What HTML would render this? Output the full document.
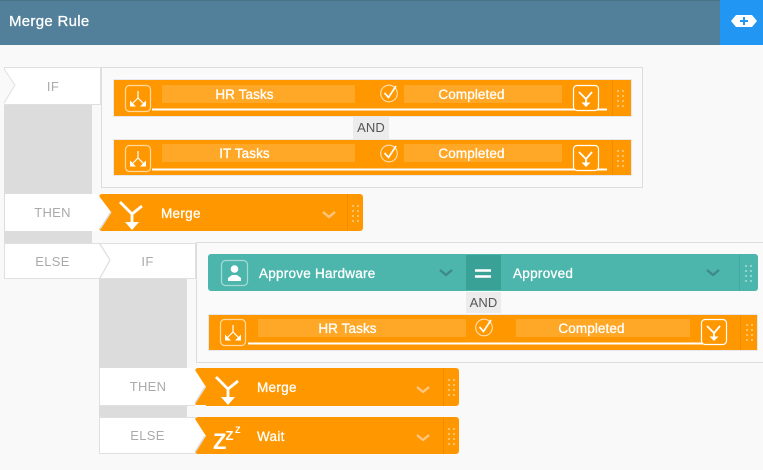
<!DOCTYPE html>
<html><head><meta charset="utf-8"><style>
html,body{margin:0;padding:0}
body{width:763px;height:470px;overflow:hidden;background:#f9f9f9;position:relative;font-family:"Liberation Sans",sans-serif}
div{position:absolute;box-sizing:border-box}
.t{white-space:nowrap;text-align:center;color:#fff;font-size:13.5px;line-height:20px;letter-spacing:.1px;-webkit-text-stroke:.3px #fff}
.m{font-size:13.5px;letter-spacing:.3px}
.l{color:#aaa;text-align:center;font-size:13px;background:#fff;border:1px solid #e0e0e0;letter-spacing:.3px}
.o{background:#ff9800;box-shadow:0 0 0 1px #e6e8ee}
.f{background:#ffa726}
.a{background:#ececec;color:#555;font-size:13px;text-align:center;letter-spacing:.1px}
svg{position:absolute;left:0;top:0}
</style></head><body>
<div style="left:0;top:0;width:763px;height:45px;background:#527f99;border-top:1px solid #4b7489"></div>
<div class="t" style="left:9px;top:12px;font-size:15px;letter-spacing:.3px">Merge Rule</div>
<div style="left:720px;top:0;width:43px;height:45px;background:#2196f3"></div>

<div style="left:4px;top:105px;width:88px;height:140px;background:#dcdcdc"></div>
<div style="left:99px;top:279px;width:88px;height:138px;background:#dcdcdc"></div>

<div style="left:101px;top:67px;width:542px;height:121px;background:#fafafa;border:1px solid #ddd"></div>
<div style="left:196px;top:242px;width:570px;height:121px;background:#fafafa;border:1px solid #ddd"></div>

<div class="l" style="left:4px;top:67px;width:97px;height:38px;line-height:37px;padding-left:1px">IF</div>
<div class="l" style="left:5px;top:194px;width:95px;height:37px;line-height:35px;border:0;padding-top:1px">THEN</div>
<div class="l" style="left:4px;top:243px;width:97px;height:36px;line-height:35px">ELSE</div>
<div class="l" style="left:99px;top:243px;width:97px;height:36px;line-height:35px">IF</div>
<div class="l" style="left:99px;top:368px;width:97px;height:38px;line-height:37px;border-width:0 0 1px 1px">THEN</div>
<div class="l" style="left:99px;top:417px;width:97px;height:37px;line-height:36px">ELSE</div>

<!-- row 1 -->
<div class="o" style="left:114px;top:80px;width:517px;height:36px"></div>
<div class="f" style="left:162px;top:85px;width:193px;height:18px"></div>
<div class="f" style="left:404px;top:85px;width:158px;height:18px"></div>
<div class="t" style="left:162px;top:85px;width:165px">HR Tasks</div>
<div class="t" style="left:404px;top:85px;width:135px">Completed</div>
<div class="a" style="left:353px;top:117px;width:36px;height:22px;line-height:22px">AND</div>
<!-- row 2 -->
<div class="o" style="left:114px;top:140px;width:517px;height:35px"></div>
<div class="f" style="left:162px;top:144px;width:193px;height:18px"></div>
<div class="f" style="left:404px;top:144px;width:158px;height:18px"></div>
<div class="t" style="left:162px;top:144px;width:165px">IT Tasks</div>
<div class="t" style="left:404px;top:144px;width:135px">Completed</div>

<!-- merge 1 -->
<div style="left:99px;top:194px;width:264px;height:37px;background:#ff9800;border-radius:3px"></div>
<div class="t m" style="left:161px;top:204px">Merge</div>

<!-- teal -->
<div style="left:208px;top:254px;width:550px;height:37px;background:#4db6ac;border-radius:3px"></div>
<div style="left:466px;top:255px;width:35px;height:35px;background:#3aa197"></div>
<div class="t m" style="left:259px;top:264px;letter-spacing:.25px">Approve Hardware</div>
<div class="t m" style="left:513px;top:264px">Approved</div>
<div class="a" style="left:466px;top:292px;width:35px;height:21px;line-height:22px">AND</div>

<!-- row 3 -->
<div class="o" style="left:209px;top:315px;width:548px;height:35px"></div>
<div class="f" style="left:258px;top:319px;width:208px;height:18px"></div>
<div class="f" style="left:516px;top:319px;width:174px;height:18px"></div>
<div class="t" style="left:258px;top:319px;width:179px">HR Tasks</div>
<div class="t" style="left:516px;top:319px;width:151px">Completed</div>

<!-- merge 2, wait -->
<div style="left:195px;top:368px;width:264px;height:38px;background:#ff9800;border-radius:3px"></div>
<div class="t m" style="left:257px;top:378px">Merge</div>
<div style="left:195px;top:417px;width:264px;height:37px;background:#ff9800;border-radius:3px"></div>
<div class="t m" style="left:257px;top:427px">Wait</div>

<svg width="763" height="470" viewBox="0 0 763 470" fill="none">
<defs>
<g id="split"><rect x=".5" y=".5" width="25" height="26" rx="4" stroke="#ffd9a0" stroke-width="1.2"/><path d="M13 6v7M13 13l-6 6M13 13l6 6" stroke="#fff" stroke-width="1.2"/><path d="M5 21.500v-6l6 6zM21 21.500v-6l-6 6z" fill="#fff"/></g>
<g id="mbox"><rect x=".5" y=".5" width="25" height="25" rx="3.500" fill="#ff9800" stroke="#fff" stroke-width="1.200"/><path d="M6 7l7 7 6-7M13 14v5" stroke="#fff" stroke-width="1.800"/><path d="M8.500 17.500h9l-4.500 4.500z" fill="#fff"/></g>
<g id="chk"><circle cx="9" cy="9.500" r="8.300" stroke="#ffe0b2" stroke-width="1.100"/><path d="M4.500 9l4 4.500L16 2" stroke="#fff" stroke-width="1.700"/></g>
<g id="merge"><path d="M1 1l12 12M13 13l10-8M13 13v11" stroke="#fff" stroke-width="2.800"/><path d="M6 21h14l-7 8z" fill="#fff"/></g>
<g id="dots" fill="#ffc266"><rect x="0" y="0" width="2" height="2"/><rect x="5" y="0" width="2" height="2"/><rect x="0" y="5" width="2" height="2"/><rect x="5" y="5" width="2" height="2"/><rect x="0" y="10" width="2" height="2"/><rect x="5" y="10" width="2" height="2"/><rect x="0" y="15" width="2" height="2"/><rect x="5" y="15" width="2" height="2"/></g>
</defs>
<!-- notches -->
<path d="M4 68l11 17-11 20z" fill="#f9f9f9"/><path d="M4 69l11 16-11 18" stroke="#e0e0e0"/>
<path d="M99 196l12 16-12 17z" fill="#fff"/><path d="M100 229l11-17" stroke="#ddd" stroke-width="1.500"/>
<path d="M99 244l11 16-11 18z" fill="#fff"/><path d="M100 244l10 16-10 18" stroke="#ddd" stroke-width="1.200"/>
<path d="M195 370l11 17-11 17z" fill="#fff"/><path d="M195 403l10-16" stroke="#ddd" stroke-width="1.500"/>
<path d="M195 419l11 17-11 17z" fill="#fff"/><path d="M195 452l10-16" stroke="#ddd" stroke-width="1.500"/>
<path d="M195 405.500h11" stroke="#fff"/>
<!-- row icons -->
<use href="#split" x="125" y="85"/><use href="#split" x="125" y="145"/><use href="#split" x="220" y="319"/>
<path d="M152 109.500h455M152 169.500h455M248 343.500h470" stroke="#fff" stroke-width="2"/>
<use href="#mbox" x="573" y="85"/><use href="#mbox" x="573" y="145"/><use href="#mbox" x="701" y="319"/>
<use href="#chk" x="380" y="84"/><use href="#chk" x="380" y="144"/><use href="#chk" x="475" y="318"/>
<path d="M612.500 80v36M612.500 140v35M347.500 194v37M740.500 315v35M443.500 368v38M443.500 417v37" stroke="#f08c00"/>
<use href="#dots" x="617" y="90"/><use href="#dots" x="617" y="150"/><use href="#dots" x="352" y="205"/>
<use href="#dots" x="746" y="324"/><use href="#dots" x="448" y="379"/><use href="#dots" x="448" y="428"/>
<!-- merge icons -->
<use href="#merge" x="119" y="201"/><use href="#merge" x="215" y="376"/>
<!-- chevrons -->
<path d="M323 212l6 5 6-5M417 387l6 5 6-5M417 435l6 5 6-5" stroke="#ffc680" stroke-width="2.400"/>
<path d="M440 270l6 5 6-5M707 270l6 5 6-5" stroke="#3e8a86" stroke-width="2.400"/>
<!-- equal -->
<path d="M475 270.500h16M475 276.500h16" stroke="#fff" stroke-width="2.600"/>
<!-- teal dots -->
<g fill="#8ed3cc"><rect x="745" y="265" width="2" height="2"/><rect x="750" y="265" width="2" height="2"/><rect x="745" y="270" width="2" height="2"/><rect x="750" y="270" width="2" height="2"/><rect x="745" y="275" width="2" height="2"/><rect x="750" y="275" width="2" height="2"/><rect x="745" y="280" width="2" height="2"/><rect x="750" y="280" width="2" height="2"/></g>
<path d="M739.500 255v36" stroke="#45a79e"/>
<!-- person -->
<rect x="221.500" y="260.500" width="26" height="25" rx="4" stroke="#a6dbd5" stroke-width="1.200"/>
<circle cx="234.500" cy="269" r="3.800" fill="#fff"/><path d="M228 281v-3l4-3h5l4 3v3z" fill="#fff"/>
<!-- plus -->
<path d="M731 21l5-6h16l5 6-5 6h-16z" fill="#fff"/><path d="M744 17v8M740 21h8" stroke="#2196f3" stroke-width="2"/>
<!-- zzz -->
<text x="213" y="449" font-family="Liberation Sans,sans-serif" font-weight="bold" font-size="22" fill="#fff">Z</text>
<text x="225.500" y="440" font-family="Liberation Sans,sans-serif" font-weight="bold" font-size="13" fill="#fff">Z</text>
<text x="235" y="433" font-family="Liberation Sans,sans-serif" font-weight="bold" font-size="9" fill="#fff">Z</text>
</svg>
</body></html>
